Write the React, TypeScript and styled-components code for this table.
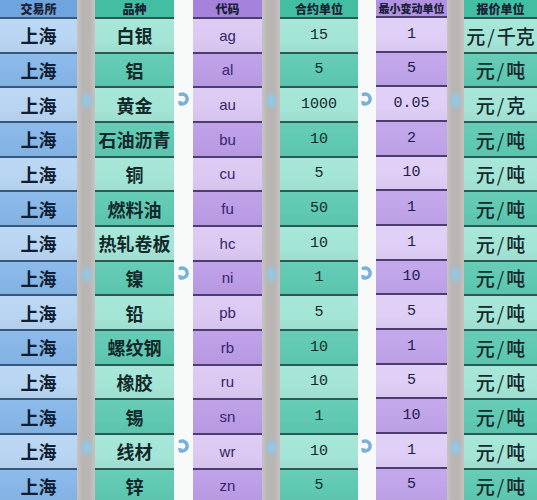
import styled, { createGlobalStyle } from 'styled-components'

const GlobalStyle = createGlobalStyle`
	html, body {
		margin: 0;
		padding: 0;
		background: #f7f9f9;
		overflow: hidden;
	}
	body {
		width: 537px;
		height: 500px;
	}
`

type Tone = 'blue' | 'teal' | 'purple' | 'lilac'
type Kind = 'cjk' | 'code' | 'num' | 'unit'

const palette: Record<Tone, { head: string; light: string; dark: string; line: string; text: string }> = {
	blue: { head: '#6fa4de', light: '#b8d5f3', dark: '#86b6e8', line: '#34587c', text: '#0f1e33' },
	teal: { head: '#44bea3', light: '#a3e5d6', dark: '#5fc9b2', line: '#2b5a54', text: '#13282a' },
	purple: { head: '#a582dc', light: '#dbc9f3', dark: '#bb9de6', line: '#4b3d70', text: '#34266a' },
	lilac: { head: '#b292e2', light: '#dfcef6', dark: '#c0a4ea', line: '#4b3d70', text: '#221c48' },
}

const ROW = 34.67
const HEAD = 19

const rows = [
	['上海', '白银', 'ag', '15', '1', '元/千克'],
	['上海', '铝', 'al', '5', '5', '元/吨'],
	['上海', '黄金', 'au', '1000', '0.05', '元/克'],
	['上海', '石油沥青', 'bu', '10', '2', '元/吨'],
	['上海', '铜', 'cu', '5', '10', '元/吨'],
	['上海', '燃料油', 'fu', '50', '1', '元/吨'],
	['上海', '热轧卷板', 'hc', '10', '1', '元/吨'],
	['上海', '镍', 'ni', '1', '10', '元/吨'],
	['上海', '铅', 'pb', '5', '5', '元/吨'],
	['上海', '螺纹钢', 'rb', '10', '1', '元/吨'],
	['上海', '橡胶', 'ru', '10', '5', '元/吨'],
	['上海', '锡', 'sn', '1', '10', '元/吨'],
	['上海', '线材', 'wr', '10', '1', '元/吨'],
	['上海', '锌', 'zn', '5', '5', '元/吨'],
]

const columns: { title: string; width: number; tone: Tone; kind: Kind; small?: boolean }[] = [
	{ title: '交易所', width: 77, tone: 'blue', kind: 'cjk' },
	{ title: '品种', width: 79, tone: 'teal', kind: 'cjk' },
	{ title: '代码', width: 69, tone: 'purple', kind: 'code' },
	{ title: '合约单位', width: 78, tone: 'teal', kind: 'num' },
	{ title: '最小变动单位', width: 71, tone: 'lilac', kind: 'num', small: true },
	{ title: '报价单位', width: 73, tone: 'teal', kind: 'unit' },
]

const gaps: { width: number; gray: boolean }[] = [
	{ width: 18, gray: true },
	{ width: 19, gray: false },
	{ width: 18, gray: true },
	{ width: 18, gray: false },
	{ width: 17, gray: true },
]

const markedRows = [2, 7, 12]

const fontFor: Record<Kind, string> = {
	cjk: `font-family: "Noto Sans CJK SC", sans-serif; font-weight: 700; font-size: 18px;`,
	code: `font-family: "Liberation Sans", sans-serif; font-size: 15px;`,
	num: `font-family: "Liberation Mono", monospace; font-size: 15px; letter-spacing: 0;`,
	unit: `font-family: "Noto Sans CJK SC", sans-serif; font-weight: 500; font-size: 19px;`,
}

const Sheet = styled.div`
	display: flex;
	width: 537px;
	height: 500px;
	overflow: hidden;
`

const Column = styled.div<{ $w: number }>`
	display: flex;
	flex-direction: column;
	width: ${p => p.$w}px;
	flex: none;
`

const Header = styled.div<{ $tone: Tone; $small?: boolean }>`
	box-sizing: border-box;
	height: ${HEAD}px;
	display: flex;
	align-items: center;
	justify-content: center;
	background: ${p => palette[p.$tone].head};
	border-bottom: 2px solid ${p => palette[p.$tone].line};
	font-family: "Noto Sans CJK SC", serif;
	font-weight: 900;
	font-size: ${p => (p.$small ? 11 : 12)}px;
	color: #1a2236;
	white-space: nowrap;
`

const Cell = styled.div<{ $tone: Tone; $dark: boolean; $kind: Kind }>`
	box-sizing: border-box;
	height: ${ROW}px;
	flex: none;
	display: flex;
	align-items: center;
	justify-content: center;
	white-space: nowrap;
	background: ${p => {
		const c = p.$dark ? palette[p.$tone].dark : palette[p.$tone].light
		return `linear-gradient(180deg, rgba(255,255,255,0.06) 0%, rgba(255,255,255,0) 60%, rgba(0,0,0,0.03) 100%), ${c}`
	}};
	border-bottom: 2px solid ${p => palette[p.$tone].line};
	color: ${p => palette[p.$tone].text};
	${p => fontFor[p.$kind]}
`

const Slash = styled.span`
	font-weight: 400;
	margin: 0 2px;
`

const Gap = styled.div<{ $w: number; $gray: boolean }>`
	display: flex;
	flex-direction: column;
	width: ${p => p.$w}px;
	flex: none;
	background: ${p =>
		p.$gray
			? 'linear-gradient(90deg, #c6c3c1 0%, #b9b5b3 30%, #b9b5b3 70%, #c6c3c1 100%)'
			: '#f8fafa'};
`

const GapHead = styled.div`
	height: ${HEAD}px;
	flex: none;
`

const GapSlot = styled.div`
	height: ${ROW}px;
	flex: none;
	display: flex;
	justify-content: center;
	align-items: flex-start;
	padding-top: 3px;
	box-sizing: border-box;
`

const Blob = styled.div`
	width: 9px;
	height: 15px;
	margin-top: 2px;
	border-radius: 50%;
	background: #8fc8ea;
	filter: blur(2px);
`

const Turn = () => (
	<svg width="14" height="16" viewBox="0 0 14 16">
		<path
			d="M3.2 3.4 A5 5 0 1 1 3.2 12.6"
			fill="none"
			stroke="#78b0d6"
			strokeWidth="3.4"
			strokeLinecap="round"
		/>
		<path d="M0.8 10 L5.6 10.6 L3 14.8 Z" fill="#78b0d6" />
	</svg>
)

const renderText = (text: string, kind: Kind) => {
	if (kind !== 'unit') return text
	const [a, b] = text.split('/')
	return (
		<>
			{a}
			<Slash>/</Slash>
			{b}
		</>
	)
}

export default function App() {
	const cells = (ci: number) =>
		rows.map((r, ri) => (
			<Cell key={ri} $tone={columns[ci].tone} $dark={ri % 2 === 1} $kind={columns[ci].kind}>
				{renderText(r[ci], columns[ci].kind)}
			</Cell>
		))

	const gapCol = (gi: number) => (
		<Gap key={`g${gi}`} $w={gaps[gi].width} $gray={gaps[gi].gray}>
			<GapHead />
			{rows.map((_, ri) => (
				<GapSlot key={ri}>
					{markedRows.includes(ri) && (gaps[gi].gray ? <Blob /> : <Turn />)}
				</GapSlot>
			))}
		</Gap>
	)

	return (
		<>
			<GlobalStyle />
			<Sheet>
				{columns.map((col, ci) => [
					<Column key={`c${ci}`} $w={col.width}>
						<Header $tone={col.tone} $small={col.small}>
							{col.title}
						</Header>
						{cells(ci)}
					</Column>,
					ci < gaps.length ? gapCol(ci) : null,
				])}
			</Sheet>
		</>
	)
}
